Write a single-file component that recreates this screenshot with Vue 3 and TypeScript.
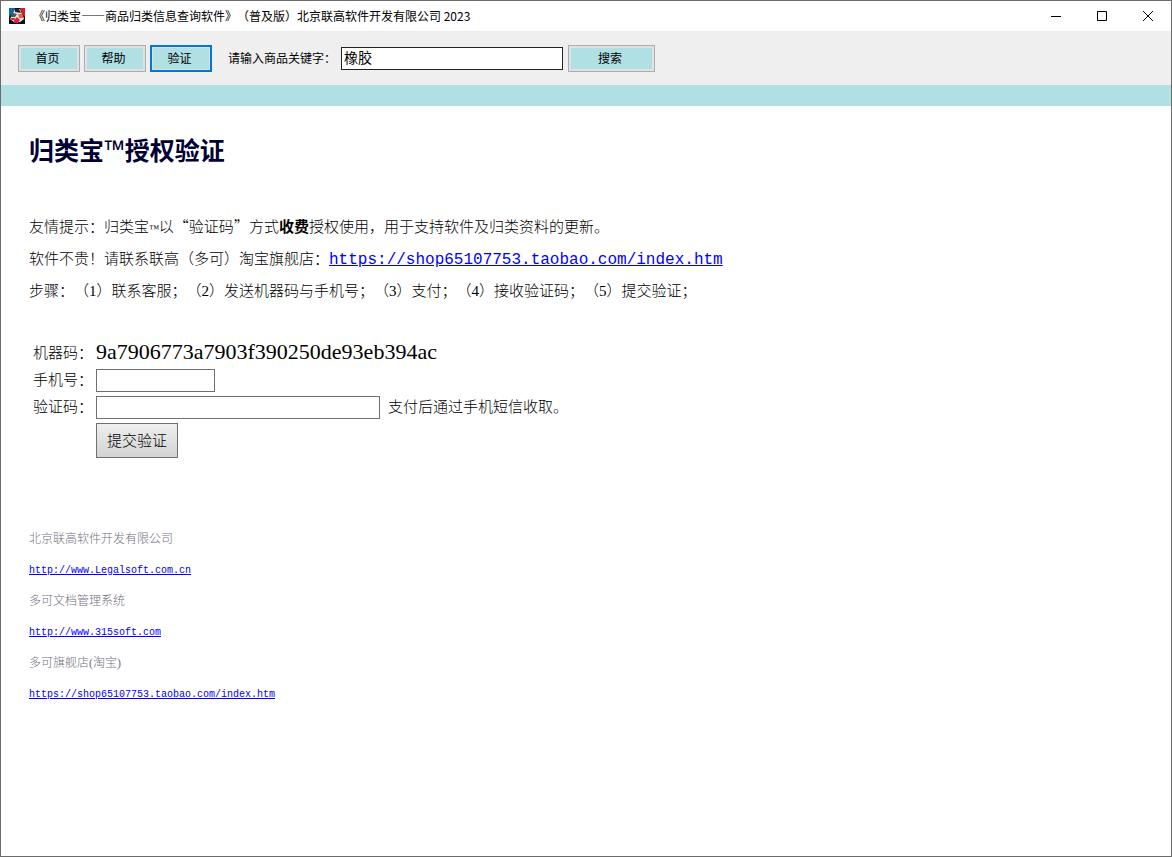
<script setup lang="ts">
import { ref } from 'vue'

interface NavItem {
  id: string
  label: string
}

interface FooterEntry {
  name: string
  url: string
}

const navItems: NavItem[] = [
  { id: 'home', label: '首页' },
  { id: 'help', label: '帮助' },
  { id: 'verify', label: '验证' },
]
const active = ref('verify')
const keyword = ref('橡胶')
const phone = ref('')
const code = ref('')
const machineCode = '9a7906773a7903f390250de93eb394ac'
const shopUrl = 'https://shop65107753.taobao.com/index.htm'

const footer: FooterEntry[] = [
  { name: '北京联高软件开发有限公司', url: 'http://www.Legalsoft.com.cn' },
  { name: '多可文档管理系统', url: 'http://www.315soft.com' },
  { name: '多可旗舰店(淘宝)', url: shopUrl },
]
</script>

<template>
  <div class="window" lang="zh-CN">
    <header class="titlebar">
      <svg class="logo" width="16" height="16" viewBox="0 0 16 16" aria-hidden="true">
        <rect width="16" height="16" fill="#0c0f14" />
        <path d="M0 0H6L3 6L0 9Z" fill="#08709a" />
        <path d="M11 0H16V9L14 7Z" fill="#e01838" />
        <path d="M6 1H11L13 6L15 11L11 14H5L1 11L4 5Z" fill="#e4e6e8" />
        <path d="M6 1L10 1L12 5L6 4Z" fill="#1a2733" />
        <path d="M4 5L8 6L6 9L2 9Z" fill="#4a5560" />
        <path d="M9 6L13 6L15 10L10 10Z" fill="#f4602c" />
        <path d="M1 10L6 10L5 12L3 12Z" fill="#d01c34" />
        <path d="M5 12L8 9L11 12L9 15H5Z" fill="#e0203c" />
      </svg>
      <span class="caption">《归类宝——商品归类信息查询软件》（普及版）北京联高软件开发有限公司 2023</span>
      <div class="window-controls">
        <button type="button" aria-label="最小化">
          <svg width="10" height="10" viewBox="0 0 10 10"><path d="M0 5.5H10" /></svg>
        </button>
        <button type="button" aria-label="最大化">
          <svg width="10" height="10" viewBox="0 0 10 10"><path d="M.5 .5H9.5V9.5H.5Z" /></svg>
        </button>
        <button type="button" aria-label="关闭">
          <svg width="10" height="10" viewBox="0 0 10 10"><path d="M0 0L10 10M10 0L0 10" /></svg>
        </button>
      </div>
    </header>

    <form class="toolbar" @submit.prevent>
      <nav class="nav">
        <button
          v-for="item in navItems"
          :key="item.id"
          type="button"
          class="tool-button"
          :class="{ active: active === item.id }"
          @click="active = item.id"
        >
          {{ item.label }}
        </button>
      </nav>
      <label class="search-label" for="keyword">请输入商品关键字：</label>
      <input id="keyword" v-model="keyword" class="keyword" type="text" />
      <button type="submit" class="tool-button search">搜索</button>
    </form>
    <div class="band"></div>

    <main class="content">
      <h1>归类宝<span class="heading-mark">™</span>授权验证</h1>

      <section class="notes">
        <p>友情提示：归类宝<span class="mark">™</span>以<span class="cjk">“</span>验证码<span class="cjk">”</span>方式<b>收费</b>授权使用，用于支持软件及归类资料的更新。</p>
        <p>软件不贵！请联系联高（多可）淘宝旗舰店：<a class="shop" :href="shopUrl">{{ shopUrl }}</a></p>
        <p>步骤：（1）联系客服；（2）发送机器码与手机号；（3）支付；（4）接收验证码；（5）提交验证；</p>
      </section>

      <form class="verify" @submit.prevent>
        <span>机器码：</span>
        <output class="machine">{{ machineCode }}</output>
        <label for="phone">手机号：</label>
        <input id="phone" v-model="phone" class="field phone" type="text" />
        <label for="code">验证码：</label>
        <div class="code-row">
          <input id="code" v-model="code" class="field code" type="text" />
          <span>支付后通过手机短信收取。</span>
        </div>
        <button type="submit" class="submit">提交验证</button>
      </form>

      <footer class="footer">
        <template v-for="entry in footer" :key="entry.url">
          <p>{{ entry.name }}</p>
          <p><a :href="entry.url">{{ entry.url }}</a></p>
        </template>
      </footer>
    </main>
  </div>
</template>

<style>
body {
  margin: 0;
  background: #fff;
}
</style>

<style scoped>
.window {
  box-sizing: border-box;
  min-height: 100vh;
  border: 1px solid #6b6b6b;
  background: #fff;
  color: #000;
  font-family: "Noto Sans CJK SC", sans-serif;
  font-size: 12px;
  text-spacing-trim: space-all;
}

button,
input {
  box-sizing: border-box;
  margin: 0;
  padding: 0;
  border-radius: 0;
  color: #000;
  font-family: inherit;
}

.titlebar {
  display: flex;
  align-items: center;
  height: 30px;
  padding-left: 8px;
}

.logo {
  flex: none;
}

.caption {
  flex: 1;
  margin-left: 8px;
  line-height: 16px;
  white-space: nowrap;
}

.window-controls {
  display: flex;
}

.window-controls button {
  display: flex;
  align-items: center;
  justify-content: center;
  width: 46px;
  height: 28px;
  border: 0;
  background: transparent;
}

.window-controls path {
  fill: none;
  stroke: #000;
  stroke-width: 1;
}

.toolbar {
  display: flex;
  align-items: center;
  height: 54px;
  padding-left: 17px;
  background: #efefef;
}

.nav {
  display: flex;
  gap: 4px;
}

.tool-button {
  width: 62px;
  height: 27px;
  padding-right: 3px;
  border: 1px solid #adadad;
  background: #b0dfe4;
  box-shadow: inset 0 0 0 2px #e1e1e1;
  font-size: 12px;
  line-height: 16px;
}

.tool-button.active {
  border: 2px solid #0078d7;
  box-shadow: inset 0 0 0 1px #e1e1e1;
}

.tool-button.search {
  width: 87px;
  margin-left: 5px;
}

.search-label {
  margin-left: 16px;
  line-height: 16px;
}

.keyword {
  width: 222px;
  height: 23px;
  margin-left: 5px;
  padding: 0 2px 2px;
  border: 1px solid #222;
  background: #fff;
  font-size: 14px;
}

.band {
  height: 21px;
  background: #b0dfe4;
}

.content {
  padding: 27px 28px 28px;
  font-family: "Liberation Serif", "Noto Sans CJK SC", serif;
  font-size: 15px;
  font-weight: 300;
}

h1 {
  margin: 0;
  color: #003;
  font-family: "Noto Sans CJK SC", sans-serif;
  font-size: 25px;
  font-weight: 700;
  line-height: 32px;
}

.heading-mark {
  font-family: "Open Sans", sans-serif;
  font-size: 27px;
  font-weight: 600;
  line-height: 1;
}

.notes {
  margin-top: 46px;
}

.notes p {
  margin: 0;
  line-height: 32px;
}

.notes .cjk {
  font-family: "Noto Sans CJK SC", sans-serif;
  line-height: 1;
}

.mark {
  font-size: 10px;
  line-height: 1;
}

b {
  font-weight: 700;
}

a {
  color: #00f;
  font-family: "Liberation Mono", monospace;
  font-weight: 400;
}

.shop {
  font-size: 16px;
  line-height: 1;
}

.verify {
  display: grid;
  grid-template-columns: 63px 1fr;
  grid-auto-rows: 23px;
  align-items: center;
  justify-items: start;
  row-gap: 4px;
  margin-top: 35px;
  padding-left: 4px;
  line-height: 23px;
  white-space: nowrap;
}

.machine {
  font-size: 22px;
  line-height: 20px;
  padding-bottom: 3px;
}

.field {
  height: 23px;
  padding: 0 3px;
  border: 1px solid #707070;
  background: #fff;
  font-size: 15px;
}

.phone {
  width: 119px;
}

.code {
  width: 284px;
}

.code-row {
  display: flex;
  align-items: center;
  gap: 8px;
}

.submit {
  grid-column: 2;
  align-self: start;
  width: 82px;
  height: 35px;
  padding-bottom: 3px;
  border: 1px solid #707070;
  background: linear-gradient(#efefef, #d3d3d3);
  font-size: 15px;
  font-weight: 300;
}

.footer {
  margin-top: 78px;
  color: #707080;
  font-size: 12px;
}

.footer p {
  margin: 0;
  line-height: 31px;
}

.footer a {
  display: block;
  width: fit-content;
  font-size: 10px;
}
</style>
